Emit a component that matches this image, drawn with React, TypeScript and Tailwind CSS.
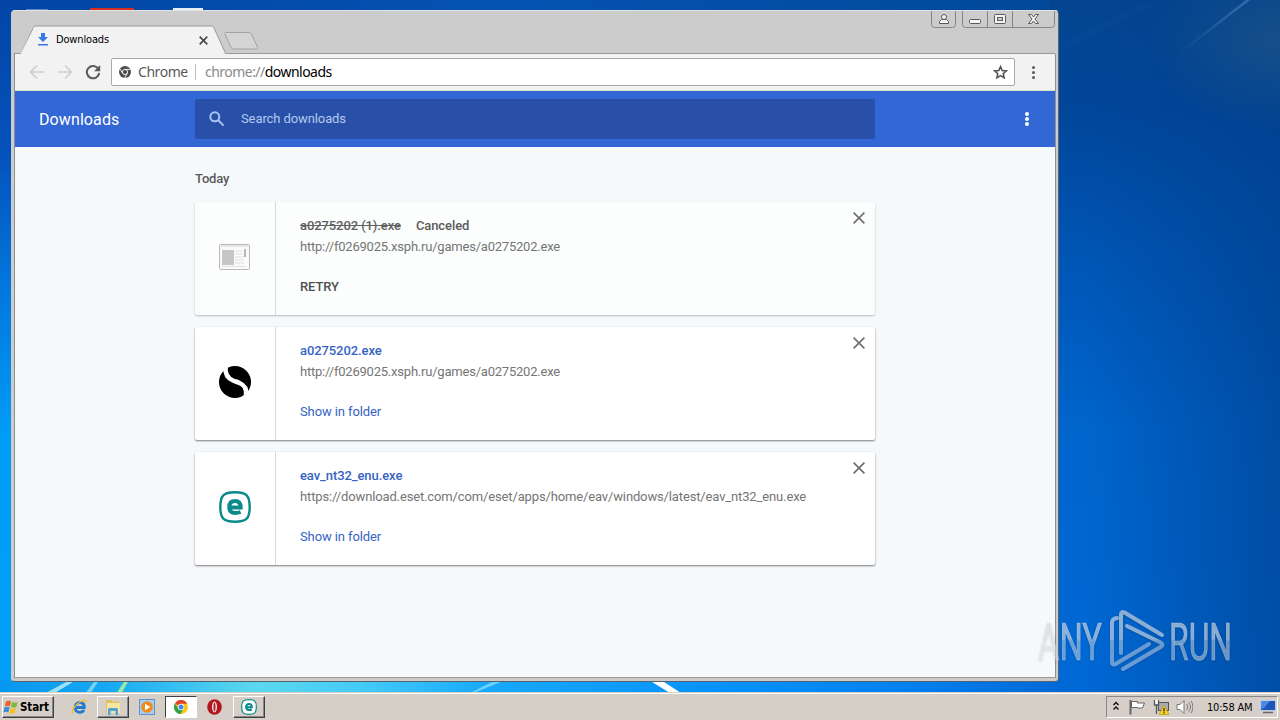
import type { ReactNode } from "react";

const tahoma = "font-['DejaVu_Sans_Condensed','DejaVu_Sans',sans-serif]";

export default function App() {
  return (
    <div className="relative flex h-[720px] w-[1280px] flex-col overflow-hidden bg-[#0058b8]">
      <Wallpaper />
      <div className="absolute top-[10px] left-[11px]">
        <BrowserWindow />
      </div>
      <Watermark />
      <Taskbar />
    </div>
  );
}

function Wallpaper() {
  return (
    <svg className="absolute inset-0" width="1280" height="720" viewBox="0 0 1280 720">
      <defs>
        <linearGradient id="left" x1="0" y1="0" x2="0" y2="1">
          <stop offset="0" stopColor="#0345a5" />
          <stop offset="0.22" stopColor="#0453bc" />
          <stop offset="0.4" stopColor="#0277dc" />
          <stop offset="0.6" stopColor="#019cf4" />
          <stop offset="1" stopColor="#00a0f6" />
        </linearGradient>
        <linearGradient id="top" x1="0" y1="0" x2="1" y2="0">
          <stop offset="0" stopColor="#0345a5" />
          <stop offset="0.4" stopColor="#0453b2" />
          <stop offset="0.8" stopColor="#02499a" />
          <stop offset="1" stopColor="#0a4484" />
        </linearGradient>
        <linearGradient id="right" x1="0" y1="0" x2="0" y2="1">
          <stop offset="0" stopColor="#03458f" />
          <stop offset="0.15" stopColor="#01469a" />
          <stop offset="0.35" stopColor="#0055b4" />
          <stop offset="0.6" stopColor="#0065cd" />
          <stop offset="1" stopColor="#0069d6" />
        </linearGradient>
        <linearGradient id="edge" x1="0" y1="0" x2="1" y2="0">
          <stop offset="0.15" stopColor="#003f8c" stopOpacity="0" />
          <stop offset="1" stopColor="#003f8c" stopOpacity="0.65" />
        </linearGradient>
        <radialGradient id="haze">
          <stop offset="0" stopColor="#1c5288" stopOpacity="0.8" />
          <stop offset="1" stopColor="#1c5288" stopOpacity="0" />
        </radialGradient>
        <linearGradient id="bottom" x1="0" y1="0" x2="1" y2="0">
          <stop offset="0" stopColor="#0697f0" />
          <stop offset="0.1" stopColor="#16a8f2" />
          <stop offset="0.24" stopColor="#5bd8ee" />
          <stop offset="0.34" stopColor="#44cbf6" />
          <stop offset="0.46" stopColor="#17a9fa" />
          <stop offset="0.66" stopColor="#0694fb" />
          <stop offset="0.85" stopColor="#0181f0" />
          <stop offset="1" stopColor="#0069d8" />
        </linearGradient>
        <linearGradient id="ray" x1="0" y1="1" x2="1" y2="0">
          <stop offset="0" stopColor="#5a90c8" stopOpacity="0" />
          <stop offset="1" stopColor="#5a90c8" stopOpacity="0.5" />
        </linearGradient>
      </defs>
      <rect width="1280" height="12" fill="url(#top)" />
      <rect width="14" height="720" fill="url(#left)" />
      <rect x="1050" width="230" height="720" fill="url(#right)" />
      <rect x="1050" width="230" height="720" fill="url(#edge)" />
      <ellipse cx="1280" cy="40" rx="130" ry="90" fill="url(#haze)" />
      <path d="M1178 53l68-53h4l-70 54z" fill="url(#ray)" />
      <path d="M1060 46c30-18 50-30 85-42l8 4c-40 12-60 28-93 46z" fill="#2a6cb4" opacity="0.08" />
      <rect y="680" width="1060" height="14" fill="url(#bottom)" />
      <path d="M44 694l22-12h7l-20 12z" fill="#bff0fb" opacity="0.8" />
      <path d="M85 694l9-12h4l-8 12z" fill="#9fe6f4" opacity="0.7" />
      <path d="M116 694l8-12h4l-7 12z" fill="#a8ee9c" opacity="0.9" />
      <path d="M468 694l24-12h9l-30 12z" fill="#7fdcfc" opacity="0.8" />
      <path d="M652 682h12l17 11h-11z" fill="#fff" />
      {/* tops of the desktop icons behind the window */}
      <path d="M26 10h22" stroke="#5d86cf" strokeWidth="2" />
      <path d="M90 9.500h44" stroke="#d52f22" strokeWidth="3" />
      <path d="M173 9.500h30" stroke="#e8eef5" strokeWidth="3" />
    </svg>
  );
}

function BrowserWindow() {
  return (
    <div className="flex h-[672px] w-[1048px] flex-col rounded-[4px] border border-t-[#e2e2e2] border-r-[#5c6470] border-b-[#59616b] border-l-[#c9cdd2] bg-[#cccccc]">
      <TitleBar />
      <div className="mx-[2px] mb-[3px] flex min-h-0 flex-1 flex-col border-r border-l border-[#8f8f8f] border-b border-b-[#a09890] bg-white">
        <Toolbar />
        <DownloadsPage />
      </div>
    </div>
  );
}

function TitleBar() {
  return (
    <div className="relative flex h-[43px] shrink-0 items-end justify-between">
      <svg className="absolute inset-0" width="1046" height="43" viewBox="0 0 1046 43">
        <path
          d="M2 42.500h5c2 0 2.500-1 3-2l11-23c.7-1.500 1-2.500 3-2.500h175c2 0 2.500.5 3 2l10.500 23c.5 1.500 1.500 2.500 3 2.500H1043V43H2z"
          fill="#f2f2f2"
          stroke="#999"
        />
        <path d="M8.500 43L22 17h177l13 26z" fill="#f2f2f2" />
        <path
          d="M214 21.500h22c2 0 3 .7 3.700 2l5.500 12c.6 1.500 0 2.500-1.700 2.500h-21c-2 0-3-.7-3.700-2l-5.500-12c-.6-1.500-.5-2.500.7-2.500z"
          fill="#d4d4d4"
          stroke="#a2a2a2"
        />
      </svg>
      <div className="relative flex h-[28px] items-center pb-px pl-[25px]">
        <svg width="12" height="13" viewBox="0 0 12 13" fill="#3b78e7">
          <path d="M4 0h4v4h3L6 9 1 4h3zM1 11h10v1.500H1z" />
        </svg>
        <span className={`ml-[7px] w-[139px] pt-[2px] text-[11px] tracking-[-0.150px] text-black ${tahoma}`}>
          Downloads
        </span>
        <svg className="mt-[1px] ml-[4px]" width="9" height="9" viewBox="0 0 9 9" stroke="#4a4a4a" strokeWidth="1.700">
          <path d="M.7.700l7.600 7.600M8.300.700L.7 8.300" />
        </svg>
      </div>
      <WindowControls />
    </div>
  );
}

function WindowControls() {
  return (
    <svg className="relative mr-[3px] self-start" width="124" height="18" viewBox="0 0 124 18" fill="none" stroke="#858585">
      <path d="M.5 0v13.500a3 3 0 0 0 3 3h18a3 3 0 0 0 3-3V0" />
      <path d="M31.500 0v13.500a3 3 0 0 0 3 3h86a3 3 0 0 0 3-3V0M56.500 0v16M81.500 0v16" />
      <g stroke="#5a5a5a" fill="#f4f4f4">
        <path d="M8.500 12.500v-2l2-2h5l2 2v2z" />
        <circle cx="13" cy="6" r="2.500" />
        <rect x="38.500" y="8.500" width="11" height="4" rx="1" />
        <rect x="63.500" y="3.500" width="11" height="9" rx="1" />
        <rect x="66.500" y="6.500" width="5" height="3" fill="#ccc" />
        <path d="M97.500 3.500h3l2 2.500 2-2.500h3l-3.500 4.500 3.500 4.500h-3l-2-2.500-2 2.500h-3L101 8z" />
      </g>
    </svg>
  );
}

function Toolbar() {
  return (
    <div className="flex h-[37px] shrink-0 items-center border-b border-[#dcdfd2] bg-[#f2f2f2]">
      <svg className="ml-[14px]" width="16" height="16" viewBox="0 0 16 16" fill="none" stroke="#cfcfcf" strokeWidth="1.700">
        <path d="M15 8H2M8 1.500L1.500 8 8 14.500" />
      </svg>
      <svg className="ml-[12px]" width="16" height="16" viewBox="0 0 16 16" fill="none" stroke="#cfcfcf" strokeWidth="1.700">
        <path d="M1 8h13M8 1.500L14.500 8 8 14.500" />
      </svg>
      <svg className="ml-[12px]" width="16" height="16" viewBox="0 0 16 16" fill="none" stroke="#5a5a5a" strokeWidth="2">
        <path d="M13.300 4.800A6.200 6.200 0 1 0 14.200 9" />
        <path d="M15.200 1v6.300H9z" fill="#5a5a5a" stroke="none" />
      </svg>
      <div className="ml-[10px] flex h-[28px] w-[904px] items-center rounded-[2px] border border-[#a9a9a9] bg-white pl-[7px] font-['Noto_Sans',sans-serif] text-[14px]">
        <ChromeMono />
        <span className="ml-[7px] w-[50px] pb-px tracking-[-0.45px] text-[#5a5a5a]">Chrome</span>
        <span className="ml-[7px] h-[16px] w-px bg-[#bdbdbd]" />
        <span className="ml-[9px] flex-1 pb-px tracking-[-0.530px] whitespace-nowrap text-black">
          <span className="text-[#8a8a8a]">chrome://</span>downloads
        </span>
        <svg className="mr-[6px]" width="15" height="14" viewBox="0 0 15 14" fill="none" stroke="#505050" strokeWidth="1.500">
          <path d="M7.500 1.600l1.700 3.900 4.200.4-3.200 2.800 1 4.100-3.700-2.200-3.700 2.200 1-4.100L1.600 5.900l4.200-.4z" />
        </svg>
      </div>
      <svg className="ml-[16px]" width="5" height="14" viewBox="0 0 5 14" fill="#5a5a5a">
        <circle cx="2.500" cy="2.500" r="1.500" />
        <circle cx="2.500" cy="7.500" r="1.500" />
        <circle cx="2.500" cy="12.500" r="1.500" />
      </svg>
    </div>
  );
}

function ChromeMono() {
  return (
    <svg width="12" height="12" viewBox="0 0 12 12">
      <circle cx="6" cy="6" r="6" fill="#4d4d4d" />
      <circle cx="6" cy="6" r="2.600" fill="none" stroke="#fff" strokeWidth="0.900" />
      <path d="M6 3.400h5.500M3.700 7.300L1 2.800M8.300 7.300L5.600 12" stroke="#fff" strokeWidth="0.900" />
    </svg>
  );
}

function DownloadsPage() {
  return (
    <div className="mx-px flex min-h-0 w-[1040px] -translate-x-px flex-1 flex-col bg-[#f6f9fc] font-[Roboto,sans-serif] text-[13px]">
      <header className="flex h-[56px] shrink-0 items-center bg-[#3367d6]">
        <h1 className="w-[180px] pt-[2px] pl-[24px] text-[16px] tracking-[0.1px] text-white">Downloads</h1>
        <div className="flex h-[40px] w-[680px] items-center rounded-[2px] bg-[#2950a8] pl-[14px]">
          <svg width="16" height="16" viewBox="0 0 16 16" fill="none" stroke="#a9c4f5" strokeWidth="2">
            <circle cx="5.800" cy="5.800" r="4.500" />
            <path d="M9 9l5.600 5.600" />
          </svg>
          <span className="ml-[16px] tracking-[-0.1px] text-[#b5c8ef]">Search downloads</span>
        </div>
        <svg className="ml-[149px]" width="6" height="16" viewBox="0 0 6 16" fill="#fff">
          <circle cx="3" cy="3" r="2" />
          <circle cx="3" cy="8" r="2" />
          <circle cx="3" cy="13" r="2" />
        </svg>
      </header>
      <main className="ml-[180px] flex w-[680px] flex-col">
        <h2 className="mt-[23px] mb-[14px] h-[18px] leading-[18px] font-medium tracking-[-0.15px] text-[#5a5a5a]">Today</h2>
        <div className="flex flex-col gap-[12px]">
          <DownloadCard
            icon={<DocIcon />}
            name="a0275202 (1).exe"
            url="http://f0269025.xsph.ru/games/a0275202.exe"
            action="RETRY"
            canceled
          />
          <DownloadCard
            icon={<SIcon />}
            name="a0275202.exe"
            url="http://f0269025.xsph.ru/games/a0275202.exe"
            action="Show in folder"
          />
          <DownloadCard
            icon={<EsetIcon size={32} />}
            name="eav_nt32_enu.exe"
            url="https://download.eset.com/com/eset/apps/home/eav/windows/latest/eav_nt32_enu.exe"
            action="Show in folder"
          />
        </div>
      </main>
    </div>
  );
}

type CardProps = {
  icon: ReactNode;
  name: string;
  url: string;
  action: string;
  canceled?: boolean;
};

function DownloadCard({ icon, name, url, action, canceled }: CardProps) {
  const urlTracking = url.length > 50 ? "tracking-[-0.138px]" : "tracking-[-0.215px]";
  return (
    <div
      className={`flex h-[113px] rounded-[2px] ${
        canceled
          ? "bg-[#fbfefd] shadow-[0_1px_2px_rgba(0,0,0,0.25)]"
          : "bg-white shadow-[0_1px_2px_rgba(0,0,0,0.5)]"
      }`}
    >
      <div className="flex w-[81px] items-center justify-center border-r border-[#d8d8d8] pb-[4px]">{icon}</div>
      <div className="flex flex-1 flex-col pt-[14px] pl-[24px] whitespace-nowrap">
        <div className="flex h-[20px] items-center font-medium tracking-[-0.090px]">
          <span className={canceled ? "text-[#616161] line-through" : "text-[#3564c4]"}>{name}</span>
          {canceled && <span className="ml-[15px] text-[#5a5a5a]">Canceled</span>}
        </div>
        <div className={`mt-px h-[20px] leading-[20px] text-[#757575] ${urlTracking}`}>{url}</div>
        <div
          className={`mt-[20px] h-[20px] leading-[20px] tracking-[-0.1px] ${
            canceled ? "font-medium text-[#505050]" : "text-[#3564c4]"
          }`}
        >
          {action}
        </div>
      </div>
      <svg className="mt-[10px] mr-[10px]" width="12" height="12" viewBox="0 0 12 12" stroke="#6e6e6e" strokeWidth="1.600">
        <path d="M.6.600l10.800 10.800M11.400.600L.6 11.400" />
      </svg>
    </div>
  );
}

function DocIcon() {
  return (
    <svg width="32" height="26" viewBox="0 0 32 26">
      <rect x="0.500" y="0.500" width="30" height="25" rx="1" fill="#fafafa" stroke="#b9b9b9" />
      <path d="M1 2h29" stroke="#d4d4d4" />
      <path d="M3 6h12v15H3z" fill="#c6c6c6" />
      <path d="M16 7h7M16 10h7M16 13h9M16 16h9M16 19h9M3 22.500h24" stroke="#e0e0e0" />
      <path d="M26 5v8" stroke="#a0a0a0" strokeWidth="1.500" />
    </svg>
  );
}

function SIcon() {
  return (
    <svg width="32" height="32" viewBox="0 0 32 32">
      <circle cx="16" cy="16" r="16" />
      <path
        d="M6.500 1C6 7.500 8 12 14 14.500c2 .9 4 1.300 6.500 2.500 5 2.300 7 5 6.500 11"
        fill="none"
        stroke="#fff"
        strokeWidth="4.600"
      />
      <path d="M24 31c1.500-3.500 1.500-6 .2-8l3.800-3 1.800 6z" fill="#fff" />
    </svg>
  );
}

function EsetIcon({ size }: { size: number }) {
  return (
    <svg width={size} height={size} viewBox="0 0 32 32" fill="none" stroke="#0b8a8c">
      <path
        d="M16 1.300c11.500 0 14.700 3.200 14.700 14.700S27.500 30.700 16 30.700 1.300 27.500 1.300 16 4.500 1.300 16 1.300z"
        fill="#fff"
        strokeWidth="2.400"
      />
      <path d="M10.500 16.600h11.200c0-4.600-1.700-6.600-5.600-6.600s-5.800 2.200-5.800 6.100 1.900 5.900 5.800 5.900c2.200 0 3.900-.4 5.500-1" strokeWidth="4" />
    </svg>
  );
}

/* "ANY ▷ RUN" overlay in the corner */
function Watermark() {
  return (
    <svg className="absolute top-[590px] left-[1030px]" width="250" height="100" viewBox="0 -10 250 100">
      <defs>
        <linearGradient id="wm" x1="0" y1="10" x2="0" y2="70" gradientUnits="userSpaceOnUse">
          <stop offset="0.480" stopColor="#dcdfe6" stopOpacity="0.600" />
          <stop offset="0.520" stopColor="#dcdfe6" stopOpacity="0.450" />
        </linearGradient>
        <filter id="shade" x="-5%" y="-5%" width="110%" height="115%">
          <feDropShadow dx="0" dy="1" stdDeviation="1" floodColor="#000" floodOpacity="0.300" />
        </filter>
      </defs>
      <g fill="url(#wm)" stroke="url(#wm)" strokeWidth="0.600" filter="url(#shade)" className="font-[Roboto,sans-serif]" fontSize="52">
        <text x="8" y="59.500" textLength="64" lengthAdjust="spacingAndGlyphs">ANY</text>
        <text x="139" y="59.500" textLength="63" lengthAdjust="spacingAndGlyphs">RUN</text>
      </g>
      <path
        d="M87 18c-3 .5-5 2-5 4.500V62c0 2.500 1.500 3 3.500 2L119 44M91 53V14.500c0-2.500 1.500-3 3.500-2L132 35M97 26l33.500 16.500c2.500 1.500 2.500 3 0 4.500L93 69"
        fill="none"
        stroke="url(#wm)"
        strokeWidth="4"
        strokeLinejoin="round"
        strokeLinecap="round"
        filter="url(#shade)"
      />
    </svg>
  );
}

function Taskbar() {
  return (
    <div className={`relative mt-auto flex h-[28px] items-center border-t border-[#d4d0c8] bg-[#d6cfc8] pt-px text-black shadow-[inset_0_1px_0_#fff] ${tahoma}`}>
      <div className="ml-[2px] flex h-[22px] w-[52px] items-center border border-t-white border-r-[#404040] border-b-[#404040] border-l-white shadow-[inset_-1px_-1px_0_#888]">
        <WinFlag />
        <span className="ml-[2px] w-[30px] pt-px text-[11.500px] font-bold tracking-[-0.100px]">Start</span>
      </div>
      <div className="ml-[17px] flex w-[17px] justify-center">
        <IeIcon />
      </div>
      <TaskButton className="ml-[9px]">
        <FolderIcon />
      </TaskButton>
      <div className="ml-[10px] flex w-[16px] justify-center">
        <MediaIcon />
      </div>
      <div className="ml-[10px] flex h-[22px] w-[32px] items-center justify-center border border-t-[#404040] border-r-white border-b-white border-l-[#404040] bg-white">
        <ChromeIcon />
      </div>
      <div className="ml-[9px] flex w-[16px] justify-center">
        <OperaIcon />
      </div>
      <TaskButton className="ml-[11px]">
        <EsetIcon size={16} />
      </TaskButton>
      <Tray />
    </div>
  );
}

function TaskButton({ className, children }: { className: string; children: ReactNode }) {
  return (
    <div
      className={`flex h-[22px] w-[32px] items-center justify-center border border-t-white border-r-[#404040] border-b-[#404040] border-l-white shadow-[inset_-1px_-1px_0_#888] ${className}`}
    >
      {children}
    </div>
  );
}

function Tray() {
  return (
    <div className="mr-[2px] ml-auto flex h-[22px] w-[172px] items-center border border-t-[#888] border-r-white border-b-white border-l-[#888]">
      <svg className="mb-[3px] ml-[5px]" width="8" height="10" viewBox="0 0 8 10" fill="none" stroke="#111" strokeWidth="1.400">
        <path d="M1.500 4L4 1.500 6.500 4M1.500 8.500L4 6l2.500 2.500" />
      </svg>
      <svg className="ml-[9px]" width="17" height="16" viewBox="0 0 17 16" fill="#fff" stroke="#666">
        <path d="M1.500 1v14.500" strokeWidth="2" />
        <path d="M2.500 2.500h6v1.500h7l-2 5H8.500V8.500h-6z" />
      </svg>
      <svg className="ml-[7px]" width="16" height="16" viewBox="0 0 16 16">
        <rect x="5.500" y="3.500" width="10" height="8" fill="#a8acb0" stroke="#555" />
        <path d="M1.500 1v5h4V1M3.500 6v9" fill="#fff" stroke="#555" strokeWidth="1.300" />
        <path d="M11 6l5 9.500H6z" fill="#fbd322" stroke="#b58e00" strokeWidth="0.600" />
        <path d="M11 9v3.500M11 13.200v1.300" stroke="#222" strokeWidth="1.300" />
      </svg>
      <svg className="ml-[7px]" width="17" height="16" viewBox="0 0 17 16" fill="none" stroke="#777">
        <path d="M1 5.500h3L8 1.500v13l-4-4H1z" fill="#fff" />
        <path d="M10.500 5c1.500 2 1.500 4 0 6M12.700 3.500c2.300 3 2.300 6 0 9M15 2c2.500 4 2.500 8 0 12" />
      </svg>
      <span className="ml-[14px] w-[46px] pt-[2px] text-[11px] tracking-[-0.200px] whitespace-nowrap">10:58 AM</span>
      <svg className="ml-[7px]" width="16" height="14" viewBox="0 0 16 14">
        <rect x="0.500" y="0.500" width="15" height="10" fill="#1f55b8" stroke="#b9cfe8" />
        <path d="M1 1h9L4 8l-3 1z" fill="#4b8ae0" />
        <path d="M3 12.500h10" stroke="#667" strokeWidth="1.500" />
      </svg>
    </div>
  );
}

function WinFlag() {
  return (
    <svg width="15" height="16" viewBox="0 0 15 16">
      <path d="M3 2.500c2-1.200 3.500-1 5 0L6.800 7.500c-1.600-1-3-1-5 0z" fill="#e8632a" />
      <path d="M9 3c2 1 3.700 1 5.700 0l-1.300 5c-2 1-3.700 1-5.500 0z" fill="#7fb93a" />
      <path d="M1.500 8.500c2-1.200 3.500-1 5 0l-1.200 5c-1.600-1-3-1-5 0z" fill="#3a8ad8" />
      <path d="M7.500 9c2 1 3.500 1 5.500 0l-1.200 5c-2 1-3.700 1-5.500 0z" fill="#f6bf26" />
    </svg>
  );
}

function IeIcon() {
  return (
    <svg width="17" height="16" viewBox="0 0 17 16" fill="none">
      <path d="M4.500 8.500h8.800c0-3.300-1.800-5-4.500-5s-4.700 2-4.700 4.900 2 4.900 4.700 4.900c2 0 3.300-.8 4.200-2.300" stroke="#1f7ad0" strokeWidth="2.800" />
      <path d="M2 14.500c-2.500-2 2-8.500 7-11.500 3.500-2 7-2.500 6.500.5" stroke="#f0bd2e" strokeWidth="1.400" />
    </svg>
  );
}

function FolderIcon() {
  return (
    <svg width="16" height="16" viewBox="0 0 16 16">
      <path d="M1 1h5l1 1.500h7V14H1z" fill="#e3c05c" />
      <path d="M2 4h13v10H2z" fill="#f7e6a2" />
      <path d="M3 16v-5.500c0-1 .6-1.500 1.500-1.500h7c1 0 1.500.6 1.500 1.500V16h-2.500v-4h-5v4z" fill="#4fa3da" />
    </svg>
  );
}

function MediaIcon() {
  return (
    <svg width="16" height="16" viewBox="0 0 16 16">
      <rect x="0.500" y="0.500" width="15" height="15" fill="#a9cdf0" stroke="#5f93cb" />
      <circle cx="8" cy="8" r="5.800" fill="#f28a1a" />
      <path d="M6 4.800L11.300 8 6 11.200z" fill="#fff" />
    </svg>
  );
}

function ChromeIcon() {
  return (
    <svg width="14" height="14" viewBox="0 0 14 14">
      <circle cx="7" cy="7" r="7" fill="#fbc816" />
      <path d="M7 7L1 3.400A7 7 0 0 1 13.200 3.800H7z" fill="#e0402f" />
      <path d="M.9 3.500A7 7 0 0 0 6.500 14l3-5.200L4.200 8.500z" fill="#2ba24c" />
      <circle cx="7" cy="7" r="3.200" fill="#fff" />
      <circle cx="7" cy="7" r="2.500" fill="#4a86e8" />
    </svg>
  );
}

function OperaIcon() {
  return (
    <svg width="15" height="16" viewBox="0 0 15 16">
      <ellipse cx="7.500" cy="8" rx="7.300" ry="7.700" fill="#b3161c" />
      <ellipse cx="7.500" cy="8" rx="2.400" ry="5.400" fill="#fff" />
      <ellipse cx="7.500" cy="8" rx="1.100" ry="4.500" fill="#a8282c" />
    </svg>
  );
}
